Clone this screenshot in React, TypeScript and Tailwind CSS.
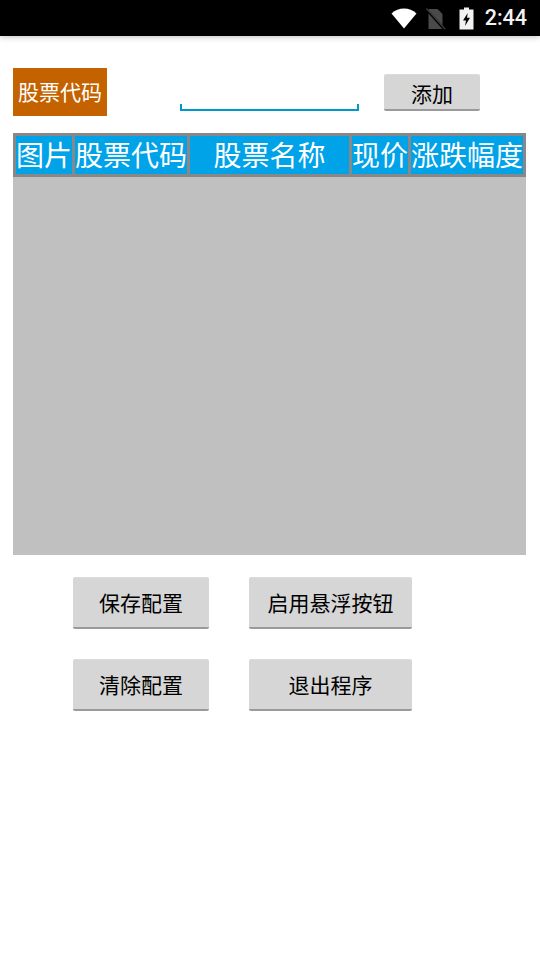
const font = "font-['Noto_Sans_CJK_SC','Noto_Sans',sans-serif]";

function Btn({ label, className }: { label: string; className: string }) {
  return (
    <button className={`flex items-center justify-center rounded-[2px] bg-[#d6d6d6] border-t border-t-[#dcdcdc] border-b-2 border-b-[#9a9a9a] text-black ${className}`}>
      {label}
    </button>
  );
}

function Cell({ label, className }: { label: string; className: string }) {
  return (
    <div className={`h-[38px] pb-[2px] flex items-center justify-center bg-[#00a2e8] text-white text-[28px] leading-none whitespace-nowrap ${className}`}>
      {label}
    </div>
  );
}

export default function App() {
  return (
    <div className={`w-[540px] h-[960px] bg-white flex flex-col overflow-hidden ${font}`}>
      <div className="h-[36px] shrink-0 bg-black flex items-center justify-end relative z-10 shadow-[0_1px_6px_rgba(0,0,0,0.25)]">
        <svg width="26" height="21" viewBox="0 0 26 21" className="mr-[9px] mt-[1px]">
          <path d="M0.5 5.5C4 2.3 8.5 0.5 13 0.5s9 1.8 12.5 5L13 20.5z" fill="#ffffff" />
        </svg>
        <svg width="20" height="22" viewBox="0 0 20 22" className="mr-[13px] mt-[1px]">
          <path d="M2.5 1h9l5 5v15h-14z" fill="#4a4a4a" />
          <path d="M0.5 1.5L18.5 21.5" stroke="#000" strokeWidth="2.5" />
          <path d="M0.5 0.5L19 21" stroke="#3d3d3d" strokeWidth="1.2" />
        </svg>
        <svg width="15" height="23" viewBox="0 0 15 23" className="mr-[11px]">
          <path d="M5 0.5h5v2h4.5v20h-14v-20h4.500z" fill="#f2f2f2" />
          <path d="M8.7 6L4 13.500h3l-1 5.500 5-8.200h-3z" fill="#000" />
        </svg>
        <span className="mr-[13px] text-[21.5px] font-medium leading-none text-[#f2f2f2] font-['Roboto',sans-serif]">2:44</span>
      </div>

      <div className="pt-[32px] pl-[13px] flex items-start">
        <div className="w-[94px] h-[48px] bg-[#c46200] text-white text-[21px] flex items-center justify-center whitespace-nowrap">
          股票代码
        </div>
        <div className="ml-[73px] mt-[36px] w-[179px] h-[7px] border-x-2 border-b-2 border-[#0099cc]" />
        <Btn label="添加" className="ml-[25px] mt-[6px] pt-[3px] w-[96px] h-[37px] text-[21px]" />
      </div>

      <div className="mt-[17px] ml-[13px] w-[513px] h-[422px] bg-[#c0c0c0] flex flex-col">
        <div className="h-[44px] bg-[#888888] flex gap-[3px] pl-[3px] pr-[3px] pt-[3px]">
          <Cell label="图片" className="w-[56px]" />
          <Cell label="股票代码" className="w-[112px]" />
          <Cell label="股票名称" className="w-[159px]" />
          <Cell label="现价" className="w-[56px]" />
          <Cell label="涨跌幅度" className="w-[112px]" />
        </div>
      </div>

      <div className="mt-[22px] ml-[73px] grid grid-cols-[136px_163px] gap-x-[40px] gap-y-[30px] text-[21px]">
        <Btn label="保存配置" className="h-[52px] pt-[1px]" />
        <Btn label="启用悬浮按钮" className="h-[52px] pt-[1px]" />
        <Btn label="清除配置" className="h-[52px] pt-[1px]" />
        <Btn label="退出程序" className="h-[52px] pt-[1px]" />
      </div>
    </div>
  );
}
